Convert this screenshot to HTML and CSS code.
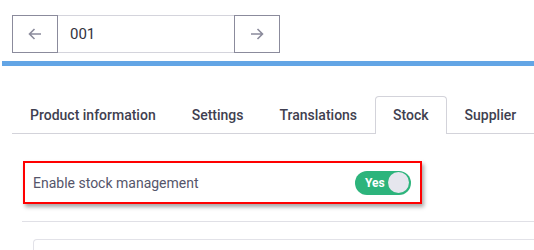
FILE: index.html
```html
<!DOCTYPE html>
<html lang="en">
<head>
  <meta charset="UTF-8">
  <title>product stock</title>
  <link rel="stylesheet" href="styles.css">
</head>
<body>

  <div class="pager">
    <button class="pager-btn" title="previous">
      <svg width="14" height="12" viewBox="0 0 14 12"><path d="M13 6H1.5M6.5 1L1.5 6l5 5" fill="none" stroke="currentColor" stroke-width="1.6"/></svg>
    </button>
    <input class="pager-input" type="text" value="001">
    <button class="pager-btn" title="next">
      <svg width="14" height="12" viewBox="0 0 14 12"><path d="M1 6h11.5M7.5 1l5 5-5 5" fill="none" stroke="currentColor" stroke-width="1.6"/></svg>
    </button>
  </div>

  <div class="bar"></div>

  <ul class="tabs">
    <li class="tab">Product information</li>
    <li class="tab">Settings</li>
    <li class="tab">Translations</li>
    <li class="tab active">Stock</li>
    <li class="tab">Supplier</li>
  </ul>

  <div class="panel">
    <div class="field highlight">
      <span class="field-label">Enable stock management</span>
      <label class="switch">
        <span class="switch-text">Yes</span>
        <span class="switch-knob"></span>
      </label>
    </div>

    <div class="divider"></div>

    <div class="card"></div>
  </div>

</body>
</html>
```

FILE: styles.css
```css
body {
  margin: 0;
  background: #fff;
  font-family: Roboto, "Liberation Sans", sans-serif;
  color: #3f3f50;
  overflow: hidden;
}

/* pager */
.pager {
  display: flex;
  height: 38px;
  margin: 15px 0 0 12px;
}

.pager-btn {
  width: 46px;
  height: 38px;
  margin: 0;
  padding: 0;
  border: 1px solid #8b8b9c;
  background: #fff;
  color: #8b8b9c;
  display: flex;
  align-items: center;
  justify-content: center;
  box-sizing: border-box;
}

.pager-input {
  width: 176px;
  height: 38px;
  box-sizing: border-box;
  border: none;
  border-top: 1px solid #d4d4dc;
  border-bottom: 1px solid #d4d4dc;
  padding: 0 0 0 12px;
  margin: 0;
  font-family: inherit;
  font-size: 15px;
  color: #333340;
  outline: none;
}

.bar {
  height: 5px;
  margin: 8px 0 0 2px;
  background: #63a5e5;
}

/* tabs */
.tabs {
  display: flex;
  list-style: none;
  margin: 30px 0 0 12px;
  padding: 0;
  border-bottom: 1px solid #d3d3da;
}

.tab {
  flex-shrink: 0;
  white-space: nowrap;
  height: 37px;
  line-height: 37px;
  padding: 0 17px;
  font-size: 14px;
  font-weight: 500;
  color: #3f3f50;
  box-sizing: border-box;
  border: 1px solid transparent;
  border-bottom: none;
  margin-bottom: -1px;
}

.tab.active {
  height: 38px;
  border-color: #d3d3da;
  border-radius: 4px 4px 0 0;
  background: #fff;
}

/* panel */
.panel {
  padding: 27px 0 0 22px;
}

.field {
  display: flex;
  align-items: center;
  justify-content: space-between;
  width: 399px;
  height: 43px;
  margin-left: 1px;
  box-sizing: border-box;
  padding: 0 9px 0 8px;
}

.highlight {
  border: 2px solid #f00;
  box-shadow: 2px 3px 4px rgba(0, 0, 0, 0.35);
}

.field-label {
  font-size: 14px;
  color: #55556a;
}

.switch {
  display: flex;
  align-items: center;
  width: 56px;
  height: 24px;
  border-radius: 12px;
  background: #2db47c;
  box-sizing: border-box;
  padding: 0 2px 0 10px;
  justify-content: space-between;
}

.switch-text {
  color: #fff;
  font-size: 12px;
  font-weight: 700;
}

.switch-knob {
  width: 21px;
  height: 21px;
  border-radius: 50%;
  background: #e6e6ee;
}

.divider {
  height: 1px;
  background: #e0e0e6;
  margin-top: 17px;
}

.card {
  height: 12px;
  margin: 17px 0 0 11px;
  border: 1px solid #e2e2e8;
  border-bottom: none;
  border-right: none;
  border-radius: 4px 0 0 0;
}
```
